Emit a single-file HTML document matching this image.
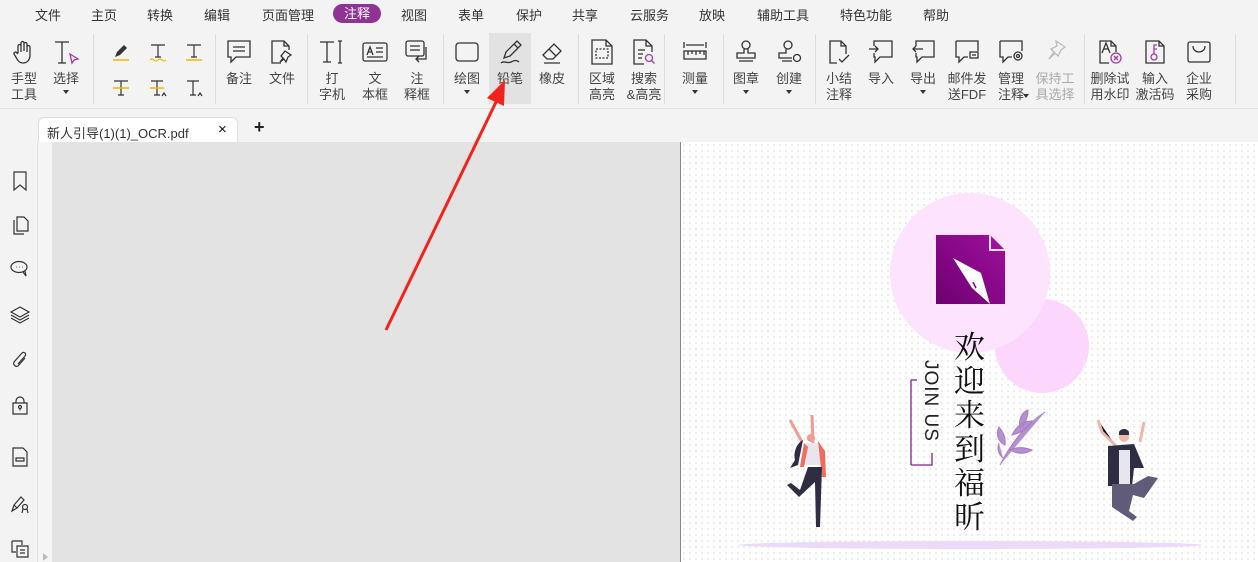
<!DOCTYPE html>
<html><head><meta charset="utf-8">
<style>
*{margin:0;padding:0;box-sizing:border-box}
body{width:1258px;height:562px;overflow:hidden;background:#f3f3f3;font-family:"Liberation Sans","Noto Sans CJK SC",sans-serif;font-size:13px;color:#333;position:relative}
.a{position:absolute}
.m{top:5px;font-size:13px;color:#333}
.lb{position:absolute;text-align:center;font-size:13px;line-height:16px;color:#444;width:60px;margin-left:-30px;top:71px}
.ic{position:absolute;top:38px;width:28px;height:28px;margin-left:-14px}
.sep{position:absolute;top:34px;width:1px;height:70px;background:#ddd}
.dd{position:absolute;width:0;height:0;border-left:3px solid transparent;border-right:3px solid transparent;border-top:4px solid #333;margin-left:-3px}
svg{overflow:visible}
.sb svg{position:absolute;left:10px;width:20px;height:20px}
</style></head><body>
<div class="a m" style="left:35px">文件</div>
<div class="a m" style="left:91px">主页</div>
<div class="a m" style="left:147px">转换</div>
<div class="a m" style="left:204px">编辑</div>
<div class="a m" style="left:262px">页面管理</div>
<div class="a" style="left:333px;top:4px;width:48px;height:19px;border-radius:10px;background:#8f3494;color:#fff;text-align:center;line-height:19px">注释</div>
<div class="a m" style="left:401px">视图</div>
<div class="a m" style="left:458px">表单</div>
<div class="a m" style="left:516px">保护</div>
<div class="a m" style="left:572px">共享</div>
<div class="a m" style="left:630px">云服务</div>
<div class="a m" style="left:699px">放映</div>
<div class="a m" style="left:757px">辅助工具</div>
<div class="a m" style="left:840px">特色功能</div>
<div class="a m" style="left:923px">帮助</div>

<div class="a" style="left:489px;top:33px;width:42px;height:71px;background:#e2e2e2"></div>
<div class="sep" style="left:93px"></div><div class="sep" style="left:215px"></div><div class="sep" style="left:307px"></div><div class="sep" style="left:443px"></div><div class="sep" style="left:578px"></div><div class="sep" style="left:664px"></div><div class="sep" style="left:723px"></div><div class="sep" style="left:815px"></div><div class="sep" style="left:1084px"></div><div class="sep" style="left:1235px"></div>
<div class="a" style="left:0;top:108px;width:1258px;height:1px;background:#e0e0e0"></div>

<svg class="ic" style="left:24px" viewBox="0 0 28 28" fill="none" stroke="#333" stroke-width="1.3"><path d="M8 15V8a1.5 1.5 0 013 0v6M11 13V5a1.5 1.5 0 013 0v8M14 13V6a1.5 1.5 0 013 0v8M17 14V9a1.5 1.5 0 013 0v8c0 5-3 8-7 8-3 0-5-2-6-4l-3-5a1.5 1.5 0 012.5-1.5L8 16"/></svg>
<div class="lb" style="left:24px">手型<br>工具</div>
<svg class="ic" style="left:66px" viewBox="0 0 28 28" fill="none" stroke="#333" stroke-width="1.3"><path d="M3 4h14M10 4v21M6 25h8"/><path d="M18 16l8 5-4 1-2 3z" stroke="#a23aa8"/></svg>
<div class="lb" style="left:66px">选择</div><div class="dd" style="left:66px;top:90px"></div>

<svg class="a" style="left:111px;top:42px" width="20" height="20" viewBox="0 0 20 20"><path d="M4 15l2-5 7-7 3 3-7 7z" fill="#333"/><path d="M2 18h16" stroke="#f5b400" stroke-width="1.5"/></svg>
<svg class="a" style="left:148px;top:42px" width="20" height="20" viewBox="0 0 20 20" fill="none" stroke="#333" stroke-width="1.2"><path d="M3 3h14M10 3v12M7 15h6"/><path d="M2 18q2-2 4 0t4 0 4 0 4 0" stroke="#f5b400"/></svg>
<svg class="a" style="left:184px;top:42px" width="20" height="20" viewBox="0 0 20 20" fill="none" stroke="#333" stroke-width="1.2"><path d="M3 3h14M10 3v12M7 15h6"/><path d="M2 18h16" stroke="#f5b400" stroke-width="1.5"/></svg>
<svg class="a" style="left:111px;top:78px" width="20" height="20" viewBox="0 0 20 20" fill="none" stroke="#333" stroke-width="1.2"><path d="M3 3h14M10 3v14M7 17h6"/><path d="M2 10h16" stroke="#f5b400" stroke-width="1.5"/></svg>
<svg class="a" style="left:148px;top:78px" width="20" height="20" viewBox="0 0 20 20" fill="none" stroke="#333" stroke-width="1.2"><path d="M3 3h12M9 3v14M6 17h6M14 18l2-3 2 3"/><path d="M2 10h14" stroke="#f5b400" stroke-width="1.5"/></svg>
<svg class="a" style="left:184px;top:78px" width="20" height="20" viewBox="0 0 20 20" fill="none" stroke="#333" stroke-width="1.2"><path d="M3 3h12M9 3v14M6 17h6M14 18l2-3 2 3"/></svg>

<svg class="ic" style="left:239px" viewBox="0 0 28 28" fill="none" stroke="#333" stroke-width="1.3"><path d="M3 3h22v16H11l-5 5v-5H3z M8 9h12M8 13h12"/></svg>
<div class="lb" style="left:239px">备注</div>
<svg class="ic" style="left:282px" viewBox="0 0 28 28" fill="none" stroke="#333" stroke-width="1.3"><path d="M13 25H4V3h12l5 5v4M16 3v5h5"/><path d="M17 13l6 4-3 2-2 5-2-3-4 3 3-4-2-2z"/></svg>
<div class="lb" style="left:282px">文件</div>

<svg class="ic" style="left:332px" viewBox="0 0 28 28" fill="none" stroke="#333" stroke-width="1.3"><path d="M2 4h14M9 4v20M5 24h8M22 3v22M20 3h4M20 25h4"/></svg>
<div class="lb" style="left:332px">打<br>字机</div>
<svg class="ic" style="left:375px" viewBox="0 0 28 28" fill="none" stroke="#333" stroke-width="1.3"><rect x="2" y="5" width="24" height="18" rx="2"/><path d="M6 17l3-8 3 8M7 14h4M15 10h7M15 14h7M6 19h16"/></svg>
<div class="lb" style="left:375px">文<br>本框</div>
<svg class="ic" style="left:417px" viewBox="0 0 28 28" fill="none" stroke="#333" stroke-width="1.3"><rect x="3" y="3" width="18" height="15" rx="2"/><path d="M7 8h10M7 12h10M23 9v12H14M16 18l-3 3 3 3"/></svg>
<div class="lb" style="left:417px">注<br>释框</div>

<svg class="ic" style="left:467px" viewBox="0 0 28 28" fill="none" stroke="#333" stroke-width="1.3"><rect x="3" y="5" width="22" height="18" rx="3"/></svg>
<div class="lb" style="left:467px">绘图</div><div class="dd" style="left:467px;top:90px"></div>
<svg class="ic" style="left:510px" viewBox="0 0 28 28" fill="none" stroke="#333" stroke-width="1.3"><path d="M8 20l2-6 11-11 4 4-11 11z M18 6l4 4"/><path d="M5 25c3-3 6 1 10-1s6-2 8 0"/></svg>
<div class="lb" style="left:510px">铅笔</div>
<svg class="ic" style="left:552px" viewBox="0 0 28 28" fill="none" stroke="#333" stroke-width="1.3"><path d="M5 17l11-11 7 7-8 8H9z M11 11l7 7M6 25h16"/></svg>
<div class="lb" style="left:552px">橡皮</div>

<svg class="ic" style="left:602px" viewBox="0 0 28 28" fill="none" stroke="#333" stroke-width="1.3"><path d="M4 26V2h14l6 6v18z M18 2v6h6"/><rect x="8" y="11" width="12" height="9" stroke-dasharray="2 1.5"/></svg>
<div class="lb" style="left:602px">区域<br>高亮</div>
<svg class="ic" style="left:644px" viewBox="0 0 28 28" fill="none" stroke="#333" stroke-width="1.3"><path d="M14 26H4V2h12l6 6v6M16 2v6h6M8 12h7M8 16h5M8 20h4"/><circle cx="19" cy="20" r="3.5" stroke="#a23aa8"/><path d="M21.5 22.5l3 3" stroke="#a23aa8"/></svg>
<div class="lb" style="left:644px">搜索<br>&amp;高亮</div>

<svg class="ic" style="left:695px" viewBox="0 0 28 28" fill="none" stroke="#333" stroke-width="1.3"><path d="M3 4v6M25 4v6M5 7h18M3 13h22v8H3zM7 13v4M11 13v3M15 13v4M19 13v3M23 13v4"/></svg>
<div class="lb" style="left:695px">测量</div><div class="dd" style="left:695px;top:90px"></div>

<svg class="ic" style="left:746px" viewBox="0 0 28 28" fill="none" stroke="#333" stroke-width="1.3"><circle cx="14" cy="7" r="4"/><path d="M12 11v4H5v5h18v-5h-7v-4M7 23h14"/></svg>
<div class="lb" style="left:746px">图章</div><div class="dd" style="left:746px;top:90px"></div>
<svg class="ic" style="left:789px" viewBox="0 0 28 28" fill="none" stroke="#333" stroke-width="1.3"><circle cx="13" cy="7" r="4"/><path d="M11 11v4H4v5h13M7 23h10"/><circle cx="22" cy="20" r="3.5"/></svg>
<div class="lb" style="left:789px">创建</div><div class="dd" style="left:789px;top:90px"></div>

<svg class="ic" style="left:839px" viewBox="0 0 28 28" fill="none" stroke="#333" stroke-width="1.3"><path d="M12 25H5V3h11l5 5v8M16 3v5h5M14 21l3 3 7-7"/></svg>
<div class="lb" style="left:839px">小结<br>注释</div>
<svg class="ic" style="left:881px" viewBox="0 0 28 28" fill="none" stroke="#333" stroke-width="1.3"><path d="M7 8V3h18v16H13l-5 5v-5H7v-4M2 11h9M8 8l3 3-3 3"/></svg>
<div class="lb" style="left:881px">导入</div>
<svg class="ic" style="left:923px" viewBox="0 0 28 28" fill="none" stroke="#333" stroke-width="1.3"><path d="M7 8V3h18v16H13l-5 5v-5H7v-4M14 11H4M7 8l-3 3 3 3"/></svg>
<div class="lb" style="left:923px">导出</div><div class="dd" style="left:923px;top:90px"></div>
<svg class="ic" style="left:967px" viewBox="0 0 28 28" fill="none" stroke="#333" stroke-width="1.3"><path d="M3 3h22v10M15 19h-4l-5 5v-5H3V3"/><rect x="17" y="14" width="8" height="6"/><path d="M19 17h4"/></svg>
<div class="lb" style="left:967px;width:70px;margin-left:-35px">邮件发<br>送FDF</div>
<svg class="ic" style="left:1011px" viewBox="0 0 28 28" fill="none" stroke="#333" stroke-width="1.3"><path d="M3 3h22v10M15 19h-4l-5 5v-5H3V3"/><circle cx="21" cy="18" r="4"/><circle cx="21" cy="18" r="1.5"/></svg>
<div class="lb" style="left:1011px">管理<br>注释</div><div class="dd" style="left:1026px;top:94px"></div>
<svg class="ic" style="left:1055px" viewBox="0 0 28 28" fill="none" stroke="#bbb" stroke-width="1.3"><path d="M15 3l9 6-4 3-3 6-3-3-6 6 5-7-3-3 6-3z"/></svg>
<div class="lb" style="left:1055px;color:#aaa">保持工<br>具选择</div>

<svg class="ic" style="left:1110px" viewBox="0 0 28 28" fill="none" stroke="#333" stroke-width="1.3"><path d="M13 25H4V3h11l5 5v6M15 3v5h5M6 15l4-10 4 10M7.5 11h5"/><circle cx="20" cy="20" r="5" stroke="#a23aa8"/><path d="M18 18l4 4M22 18l-4 4" stroke="#a23aa8"/></svg>
<div class="lb" style="left:1110px;width:70px;margin-left:-35px">删除试<br>用水印</div>
<svg class="ic" style="left:1155px" viewBox="0 0 28 28" fill="none" stroke="#333" stroke-width="1.3"><path d="M5 25V3h13l5 5v17zM18 3v5h5"/><circle cx="13" cy="19" r="3" stroke="#a23aa8"/><path d="M13 16V7h3M13 11h3" stroke="#a23aa8"/></svg>
<div class="lb" style="left:1155px">输入<br>激活码</div>
<svg class="ic" style="left:1199px" viewBox="0 0 28 28" fill="none" stroke="#333" stroke-width="1.3"><rect x="3" y="4" width="22" height="20" rx="2"/><path d="M8 8c0 8 12 8 12 0"/></svg>
<div class="lb" style="left:1199px">企业<br>采购</div>

<div class="a" style="left:38px;top:117px;width:200px;height:25px;background:#fff;border:1px solid #ddd;border-bottom:none;border-radius:6px 6px 0 0"></div>
<div class="a" style="left:47px;top:123px;font-size:13px;color:#333">新人引导(1)(1)_OCR.pdf</div>
<div class="a" style="left:218px;top:121px;font-size:15px;color:#111">×</div>
<div class="a" style="left:254px;top:117px;font-size:18px;color:#222;font-weight:bold">+</div>

<div class="a" style="left:0;top:142px;width:38px;height:420px;background:#f3f3f3;border-right:1px solid #e2e2e2"></div>
<div class="a" style="left:39px;top:142px;width:13px;height:420px;background:#f5f5f5"></div>
<div class="a" style="left:43px;top:553px;border-top:4px solid transparent;border-bottom:4px solid transparent;border-left:5px solid #bbb"></div>
<div class="sb">
<svg style="top:171px" viewBox="0 0 20 20" fill="none" stroke="#333" stroke-width="1.2"><path d="M4 1h12v18l-6-5-6 5z"/></svg>
<svg style="top:215px" viewBox="0 0 20 20" fill="none" stroke="#333" stroke-width="1.2"><path d="M7 2h7l4 4v10H7zM4 5v14h10"/></svg>
<svg style="top:259px" viewBox="0 0 20 20" fill="none" stroke="#333" stroke-width="1.2"><ellipse cx="9" cy="8" rx="8" ry="5.5"/><path d="M6 8h.5M9 8h.5M12 8h.5M13 13l3 4-1-5"/></svg>
<svg style="top:305px" viewBox="0 0 20 20" fill="none" stroke="#333" stroke-width="1.2"><path d="M10 2l9 5-9 5-9-5zM1 10l9 5 9-5M1 13l9 5 9-5"/></svg>
<svg style="top:350px" viewBox="0 0 20 20" fill="none" stroke="#333" stroke-width="1.2"><path d="M15 8l-7 8a3 3 0 01-4-4l8-9a2 2 0 013 3l-7 8"/></svg>
<svg style="top:395px" viewBox="0 0 20 20" fill="none" stroke="#333" stroke-width="1.2"><path d="M6 8V6a4 4 0 018 0v2M3 8h14v11H3z"/><circle cx="10" cy="12" r="1.5"/><path d="M10 13.5v2"/></svg>
<svg style="top:447px" viewBox="0 0 20 20" fill="none" stroke="#333" stroke-width="1.2"><path d="M3 1h10l4 4v14H3zM6 11h8v3H6z"/></svg>
<svg style="top:494px" viewBox="0 0 20 20" fill="none" stroke="#333" stroke-width="1.2"><path d="M2 17l2-6 7-8 3 3-7 8zM4 11l3 3"/><circle cx="15" cy="13" r="2.5"/><path d="M13 15l-1 4M17 15l1 4"/></svg>
<svg style="top:539px" viewBox="0 0 20 20" fill="none" stroke="#333" stroke-width="1.2"><path d="M2 2h10v4M2 2v11h4M7 7h11v11H7zM10 11h5M10 14h5"/></svg>
</div>

<div class="a" style="left:52px;top:142px;width:628px;height:420px;background:#e3e3e3"></div>
<div class="a" style="left:680px;top:142px;width:1px;height:420px;background:#888"></div>
<div class="a" style="left:681px;top:142px;width:577px;height:420px;background-color:#fff;background-image:radial-gradient(#e6e6e6 0.8px,transparent 1px);background-size:6px 6px"></div>

<svg class="a" style="left:681px;top:142px" width="577" height="420" viewBox="681 142 577 420">
<ellipse cx="970" cy="545" rx="232" ry="4" fill="#eadcf8"/>
<circle cx="1042" cy="346" r="47" fill="#fdd6fd"/>
<ellipse cx="970" cy="273" rx="80" ry="80" fill="#fde3fd"/>
<defs><linearGradient id="g" x1="0" y1="1" x2="1" y2="0"><stop offset="0" stop-color="#6d0070"/><stop offset="1" stop-color="#a0109e"/></linearGradient></defs>
<path d="M936 235h53l16 16v53h-69z" fill="url(#g)"/>
<path d="M989 235v16h16z" fill="#fde3fd"/>
<path d="M991 236l13 13h-13z" fill="#a0109e"/>
<path d="M953 258l28 15 9 31-18-16z" fill="#fff"/>
<path d="M976 288l-3-6" stroke="#8a0088" stroke-width="1.5"/>
<path d="M911 380v85M911 380h6M911 465h21v-12" stroke="#8a1a90" stroke-width="1.3" fill="none"/>
<text x="925" y="360" transform="rotate(90 925 360)" font-family="Liberation Sans,sans-serif" font-size="19" fill="#222" letter-spacing="1">JOIN US</text>
<g font-family="Noto Serif CJK SC,serif" font-size="31" fill="#111"><text x="954" y="358">欢</text><text x="954" y="392">迎</text><text x="954" y="426">来</text><text x="954" y="460">到</text><text x="954" y="494">福</text><text x="954" y="528">昕</text></g>
<path d="M1000 465c10-20 25-40 45-53M1005 445c-8-4-9-12-6-18 5 6 7 12 6 18zM1012 435c5-10 12-14 20-14-4 8-12 12-20 14zM1020 428c-2-8 2-16 8-18 0 8-3 14-8 18zM1010 450c6-3 14-3 22 0-8 5-15 4-22 0zM1003 458c-5-4-6-10-4-15" fill="#b58fd0" stroke="#a47cc6" stroke-width="1"/>
<path d="M790 420l12 22M812 415l1 28" stroke="#f49a95" stroke-width="3"/>
<path d="M803 440c-6 3-10 12-8 20l-5 8 8-3z" fill="#2f2d42"/>
<path d="M806 443h14l3 22h-17z" fill="#e7e6ee"/>
<path d="M804 443l4 4-4 20h-4zM818 441l7 10 1 26h-4z" fill="#f26b5e"/>
<path d="M808 467h14l-2 60h-4l-1-45-16 15-12-12 4-2 9 7z" fill="#2f2d42"/>
<circle cx="811" cy="438" r="4" fill="#f49a95"/>
<path d="M1098 420l4 12 14 14M1144 422l-4 20" stroke="#f0b7a9" stroke-width="3"/>
<circle cx="1124" cy="437" r="5" fill="#f0b7a9"/><path d="M1119 432c2-4 8-4 10 0v3h-10z" fill="#2f2d42"/>
<path d="M1108 446l26-2 10 24h-10l-2 18h-24z" fill="#2f2d42"/>
<path d="M1119 450h11v34h-11z" fill="#e7e6ee"/>
<path d="M1112 484h22l14-8 10 2-14 20-11-3-4 16 8 6-4 4-21-14z" fill="#5f5b78"/>
</svg>
<svg class="a" style="left:0;top:0" width="1258" height="562"><path d="M386 330L497 100" stroke="#f2231d" stroke-width="3"/><path d="M505 80l-1 26-17-8z" fill="#f2231d"/></svg>
</body></html>
